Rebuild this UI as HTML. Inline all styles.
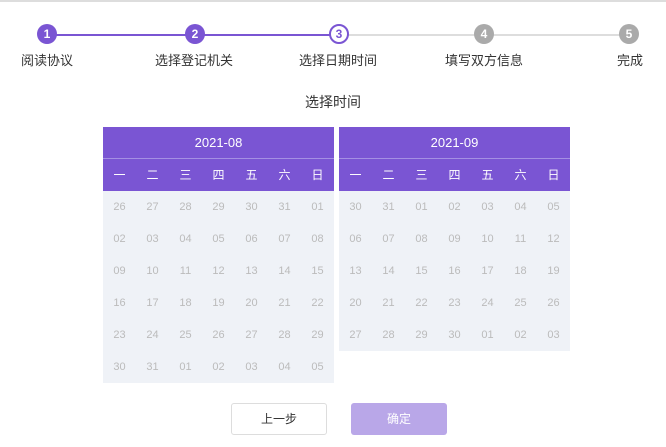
<!DOCTYPE html>
<html><head><meta charset="utf-8"><style>
body{margin:0;width:666px;height:447px;background:#fff;font-family:"Liberation Sans","Noto Sans CJK SC",sans-serif;position:relative;overflow:hidden}
.top{position:absolute;left:0;top:0;width:666px;height:2px;background:#ddd}
.line{position:absolute;height:2px;top:34px}
.c{position:absolute;width:20px;height:20px;border-radius:50%;top:24px;color:#fff;font-size:12px;font-weight:bold;text-align:center;line-height:20px;box-sizing:border-box}
.l{position:absolute;top:50px;font-size:13px;color:#333;width:100px;text-align:center}
.title{position:absolute;top:92px;left:0;width:666px;text-align:center;font-size:14px;color:#333}
.cal{position:absolute;top:127px;width:231px;background:#eff2f7}
.h{background:#7a55d3;color:#fff;height:31px;line-height:31px;text-align:center;font-size:13px;border-bottom:1px solid #a58fe3}
.w{background:#7a55d3;color:#fff;display:flex;height:32px;line-height:32px;font-size:12px}
.w span,.r span{flex:1;text-align:center}
.r{display:flex;height:32px;line-height:32px;font-size:11px;color:#bbb}
.btn{position:absolute;top:403px;width:96px;height:32px;border-radius:3px;box-sizing:border-box;text-align:center;line-height:30px;font-size:12px}
</style></head><body>
<div class="top"></div>
<div class="line" style="left:47px;width:292px;background:#7a55d3"></div>
<div class="line" style="left:339px;width:290px;background:#ddd"></div>
<div class="c" style="left:37px;background:#7a55d3">1</div>
<div class="c" style="left:185px;background:#7a55d3">2</div>
<div class="c" style="left:329px;background:#fff;border:2px solid #7a55d3;color:#7a55d3;line-height:16px">3</div>
<div class="c" style="left:474px;background:#aaa">4</div>
<div class="c" style="left:619px;background:#aaa">5</div>
<div class="l" style="left:-3px">阅读协议</div>
<div class="l" style="left:144px">选择登记机关</div>
<div class="l" style="left:288px">选择日期时间</div>
<div class="l" style="left:434px">填写双方信息</div>
<div class="l" style="left:580px">完成</div>
<div class="title">选择时间</div>
<div class="cal" style="left:103px">
<div class="h">2021-08</div>
<div class="w"><span>一</span><span>二</span><span>三</span><span>四</span><span>五</span><span>六</span><span>日</span></div>
<div class="r"><span>26</span><span>27</span><span>28</span><span>29</span><span>30</span><span>31</span><span>01</span></div>
<div class="r"><span>02</span><span>03</span><span>04</span><span>05</span><span>06</span><span>07</span><span>08</span></div>
<div class="r"><span>09</span><span>10</span><span>11</span><span>12</span><span>13</span><span>14</span><span>15</span></div>
<div class="r"><span>16</span><span>17</span><span>18</span><span>19</span><span>20</span><span>21</span><span>22</span></div>
<div class="r"><span>23</span><span>24</span><span>25</span><span>26</span><span>27</span><span>28</span><span>29</span></div>
<div class="r"><span>30</span><span>31</span><span>01</span><span>02</span><span>03</span><span>04</span><span>05</span></div>
</div>
<div class="cal" style="left:339px">
<div class="h">2021-09</div>
<div class="w"><span>一</span><span>二</span><span>三</span><span>四</span><span>五</span><span>六</span><span>日</span></div>
<div class="r"><span>30</span><span>31</span><span>01</span><span>02</span><span>03</span><span>04</span><span>05</span></div>
<div class="r"><span>06</span><span>07</span><span>08</span><span>09</span><span>10</span><span>11</span><span>12</span></div>
<div class="r"><span>13</span><span>14</span><span>15</span><span>16</span><span>17</span><span>18</span><span>19</span></div>
<div class="r"><span>20</span><span>21</span><span>22</span><span>23</span><span>24</span><span>25</span><span>26</span></div>
<div class="r"><span>27</span><span>28</span><span>29</span><span>30</span><span>01</span><span>02</span><span>03</span></div>
</div>
<div class="btn" style="left:231px;border:1px solid #ddd;color:#333">上一步</div>
<div class="btn" style="left:351px;background:#b9a7e8;color:#fff;line-height:32px">确定</div>
</body></html>
